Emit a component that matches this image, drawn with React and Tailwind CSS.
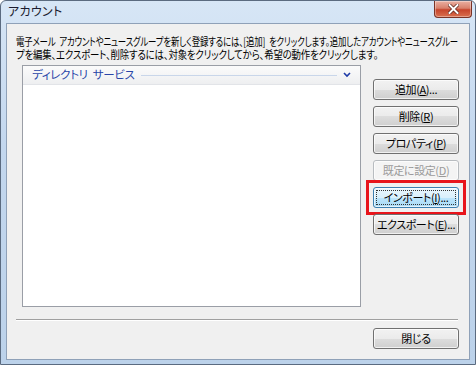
import React, { useLayoutEffect, useRef, useState } from 'react';
import clsx from 'clsx';

const jp = "font-['Noto_Sans_CJK_JP','Noto_Sans',sans-serif] [font-feature-settings:'palt']";

// squeeze a line to the width the narrow system font gave it
const FitLine = ({ width, children }) => {
  const ref = useRef(null);
  const [scale, setScale] = useState(1);
  useLayoutEffect(() => {
    if (ref.current) setScale(width / ref.current.scrollWidth);
  }, [width]);
  return (
    <div className="h-[13px] w-[444px]">
      <span
        ref={ref}
        className="inline-block origin-left whitespace-nowrap leading-[13px]"
        style={{ transform: `scaleX(${scale})` }}
      >
        {children}
      </span>
    </div>
  );
};

const Sp = () => <span className="inline-block w-[5px]" />;

const Btn = ({ children, disabled, focused }) => (
  <button
    className={clsx(
      'relative h-[21px] w-[86px] shrink-0 rounded-[3px] border text-[11px] leading-none tracking-[-0.4px] shadow-[inset_0_0_0_1px_rgba(255,255,255,0.7)]',
      jp,
      disabled && 'border-[#b8bcc0] bg-[#f4f4f4] text-[#9a9a9a]',
      focused &&
        'border-[#3c7fb1] bg-[linear-gradient(#eaf6fd_0%,#d9f0fc_50%,#bee6fd_50%,#a7d9f5_100%)] text-black',
      !disabled && !focused &&
        'border-[#707070] bg-[linear-gradient(#f2f2f2_0%,#ebebeb_50%,#dddddd_50%,#cfcfcf_100%)] text-black'
    )}
  >
    {focused && <span className="absolute inset-[2px] border border-dotted border-[#333]" />}
    {focused && <span className="absolute -inset-x-[8px] -inset-y-[8px] border-[3px] border-[#e8141b]" />}
    <span className="relative">{children}</span>
  </button>
);

export default function App() {
  return (
    <div className="flex h-[365px] w-[476px] flex-col overflow-hidden rounded-t-[6px] border border-[#5b6b80] bg-[linear-gradient(180deg,#d7e6f6_0%,#c3d7ee_40%,#bcd2ea_100%)]">
      {/* Title bar */}
      <div className="flex h-[22px] shrink-0 items-start justify-between">
        <span className={clsx('pl-[7px] pt-[3px] text-[12px] leading-[14px] tracking-[0.3px] text-[#1b1b2e]', jp)}>
          アカウント
        </span>
        <div className="mr-[3px] flex h-[17px] w-[38px] items-center justify-center rounded-b-[4px] border border-t-0 border-[#7a3326] bg-[linear-gradient(#eab0a2_0%,#d8806c_45%,#c7442b_55%,#d9704f_100%)] shadow-[inset_0_0_0_1px_rgba(255,255,255,0.35)]">
          <svg width="11" height="10" viewBox="0 0 11 10">
            <path d="M1.5 1 L9.5 9 M9.5 1 L1.5 9" stroke="#5a2016" strokeWidth="3.4" strokeLinecap="square" />
            <path d="M1.5 1 L9.5 9 M9.5 1 L1.5 9" stroke="#ffffff" strokeWidth="2" strokeLinecap="square" />
          </svg>
        </div>
      </div>

      {/* Client area */}
      <div className="mx-[5px] mb-[4px] flex flex-1 flex-col border border-[#8fa1b8] bg-[#f0f0f0] px-[9px] pt-[11px]">
        <div className={clsx('text-[11px] leading-[13px] tracking-[-0.2px] text-black', jp)}>
          <FitLine width={442}>
            電子メール<Sp />アカウントやニュースグループを新しく登録するには、[追加]<Sp />をクリックします。追加したアカウントやニュースグルー
          </FitLine>
          <FitLine width={362}>
            プを編集、エクスポート、削除するには、対象をクリックしてから、希望の動作をクリックします。
          </FitLine>
        </div>

        <div className="mt-[4px] flex">
          {/* List */}
          <div className="ml-[6px] flex h-[242px] w-[339px] flex-col border border-[#9a9ea6] bg-white">
            <div className="flex h-[19px] items-center border-b border-[#e2e4e8] bg-[linear-gradient(#fbfbfb,#eeeff1)] pl-[9px] pr-[9px]">
              <span className={clsx('text-[11.5px] leading-none tracking-[-0.3px] text-[#2a46a8]', jp)}>
                ディレクトリ<Sp />サービス
              </span>
              <div className="ml-[6px] h-px flex-1 bg-[#c9d6ea]" />
              <svg className="ml-[6px]" width="8" height="6" viewBox="0 0 8 6">
                <path d="M1 1 L4 4 L7 1" fill="none" stroke="#1e3aa8" strokeWidth="1.6" />
              </svg>
            </div>
          </div>

          {/* Buttons */}
          <div className="ml-[12px] mt-[14px] flex flex-col gap-[6px]">
            <Btn>
              追加(<span className="underline">A</span>)...
            </Btn>
            <Btn>
              削除(<span className="underline">R</span>)
            </Btn>
            <Btn>
              プロパティ(<span className="underline">P</span>)
            </Btn>
            <Btn disabled>
              既定に設定(<span className="underline">D</span>)
            </Btn>
            <Btn focused>
              インポート(<span className="underline">I</span>)...
            </Btn>
            <Btn>
              エクスポート(<span className="underline">E</span>)...
            </Btn>
          </div>
        </div>

        <div className="mt-[12px] h-[2px] w-[442px] border-t border-b border-t-[#a0a0a0] border-b-white" />

        <div className="mt-[7px] flex justify-end pr-px">
          <Btn>閉じる</Btn>
        </div>
      </div>
    </div>
  );
}
